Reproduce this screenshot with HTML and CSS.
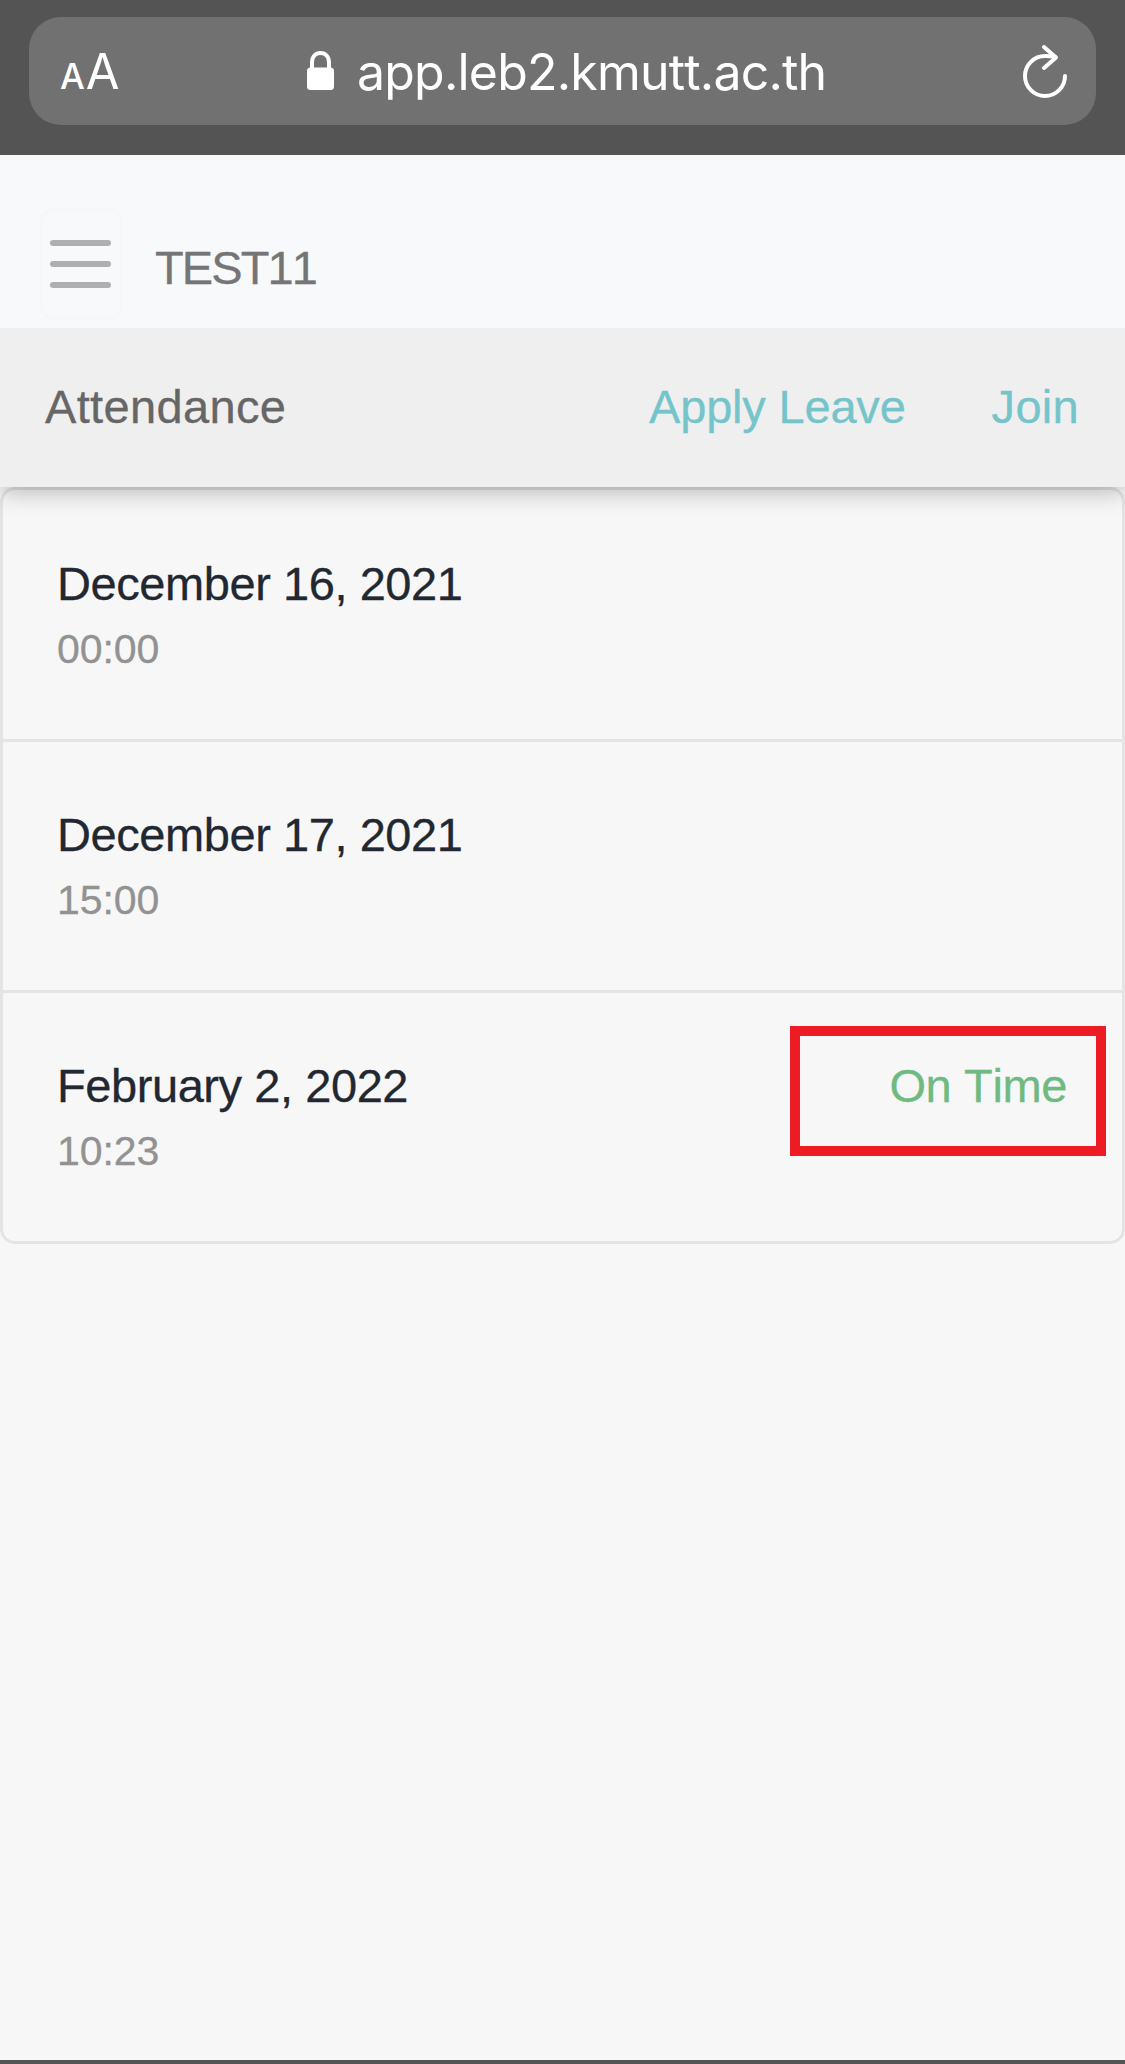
FILE: index.html
```html
<!DOCTYPE html>
<html lang="en">

<head>
    <meta charset="UTF-8">
    <meta name="viewport" content="width=device-width, initial-scale=1.0">
    <title>Attendance</title>
    <link rel="stylesheet" href="styles.css">
</head>

<body>

    <!-- Browser bar -->
    <div class="browser-bar">
        <div class="address-field">
            <div class="text-size"><span class="small-a">A</span><span class="big-a">A</span></div>
            <div class="address">
                <svg class="lock" width="28" height="40" viewBox="0 0 28 40">
                    <path d="M5 18V11.5C5 5.5 8.500 2 13.500 2S22 5.500 22 11.500V18" fill="none" stroke="#fff" stroke-width="4" />
                    <rect x="0" y="16.500" width="27" height="22.500" rx="3.500" fill="#fff" />
                </svg>
                <span class="url">app.leb2.kmutt.ac.th</span>
            </div>
            <svg class="reload" width="46" height="56" viewBox="0 0 46 56">
                <path d="M43 33A20 20 0 1 1 23 13Q28 13 33 14" />
                <path d="M22 4L34 14.500L22 25" />
            </svg>
        </div>
    </div>

    <!-- Course header -->
    <div class="header">
        <button class="menu-button">
            <span class="line"></span>
            <span class="line"></span>
            <span class="line"></span>
        </button>
        <span class="course">TEST11</span>
    </div>

    <!-- Page toolbar -->
    <div class="toolbar">
        <span class="title">Attendance</span>
        <a class="link apply">Apply Leave</a>
        <a class="link join">Join</a>
    </div>

    <!-- Attendance list -->
    <div class="list">
        <div class="row">
            <div>
                <div class="date">December 16, 2021</div>
                <div class="time">00:00</div>
            </div>
        </div>
        <div class="row">
            <div>
                <div class="date">December 17, 2021</div>
                <div class="time">15:00</div>
            </div>
        </div>
        <div class="row">
            <div>
                <div class="date">February 2, 2022</div>
                <div class="time">10:23</div>
            </div>
            <div class="status">On Time</div>
            <div class="highlight"></div>
        </div>
    </div>

    <div class="bottom-bar"></div>

</body>

</html>
```
FILE: styles.css
```css
* {
    box-sizing: border-box;
}

body {
    margin: 0;
    height: 2064px;
    display: flex;
    flex-direction: column;
    overflow: hidden;
    background: #f7f7f7;
    font-family: "Liberation Sans", Arial, sans-serif;
    font-size: 47px;
    line-height: 56px;
    font-kerning: none;
    white-space: nowrap;
    -webkit-text-stroke: 0.3px;
}

/* Browser bar */
.browser-bar {
    height: 155px;
    padding: 17px 29px 30px;
    background: #545454;
}

.address-field {
    display: flex;
    height: 108px;
    border-radius: 32px;
    background: #717171;
    color: #fff;
    font-family: Inter, sans-serif;
    -webkit-text-stroke: 0;
}

.text-size {
    display: flex;
    align-items: baseline;
    width: 278px;
    padding: 27px 0 0 31px;
}

.small-a {
    font-size: 35px;
    font-weight: 500;
}

.big-a {
    margin-left: 1px;
    font-size: 49px;
}

.address {
    display: flex;
    width: 714px;
}

.lock {
    margin-top: 34px;
}

.url {
    margin: 27px 0 0 22px;
    font-size: 50px;
    letter-spacing: -0.8px;
}

.reload {
    margin-top: 26px;
    margin-left: 1px;
    fill: none;
    stroke: #fff;
    stroke-width: 4px;
    stroke-linecap: round;
    stroke-linejoin: round;
}

/* Course header */
.header {
    display: flex;
    height: 173px;
    padding: 53px 40px 0;
    background: #f8f9fb;
    color: #757575;
}

.menu-button {
    display: flex;
    flex-direction: column;
    gap: 15px;
    width: 83px;
    height: 112px;
    padding: 29px 7px;
    border: 3px solid #f7f7f7;
    border-radius: 14px;
    background: none;
}

.line {
    width: 61px;
    height: 6px;
    border-radius: 3px;
    background: #afafaf;
}

.course {
    margin: 32px 0 0 32px;
    letter-spacing: -1.9px;
}

/* Page toolbar */
.toolbar {
    position: relative;
    z-index: 1;
    display: flex;
    height: 159px;
    padding: 51px 46px 0 45px;
    background: #efefef;
    box-shadow: 0 3px 24px rgba(0, 0, 0, 0.3);
    clip-path: inset(0 0 -30px 0);
}

.title {
    color: #666;
    letter-spacing: 0.35px;
}

.link {
    color: #76c4cb;
}

.apply {
    margin-left: auto;
    letter-spacing: -0.2px;
}

.join {
    margin-left: 86px;
    letter-spacing: 0.3px;
}

/* Attendance list */
.list {
    border: 3px solid #e4e4e4;
    border-radius: 15px;
}

.row {
    position: relative;
    display: flex;
    justify-content: space-between;
    height: 251px;
    padding: 65px 55px 0 54px;
    border-bottom: 3px solid #e4e4e4;
}

.row:first-child {
    height: 252px;
    padding-top: 66px;
}

.row:last-child {
    height: 248px;
    border-bottom: none;
}

.date {
    color: #222831;
    letter-spacing: -0.43px;
}

.time {
    margin-top: 13px;
    color: #929292;
    font-size: 41px;
    line-height: 48px;
    letter-spacing: -0.1px;
}

.status {
    color: #6fba80;
    letter-spacing: -0.37px;
}

/* Frame over the status */
.highlight {
    position: absolute;
    top: 33px;
    right: 16px;
    width: 316px;
    height: 130px;
    border: 10px solid #ed1c24;
}

.bottom-bar {
    height: 4px;
    margin-top: auto;
    background: #545456;
}
```
